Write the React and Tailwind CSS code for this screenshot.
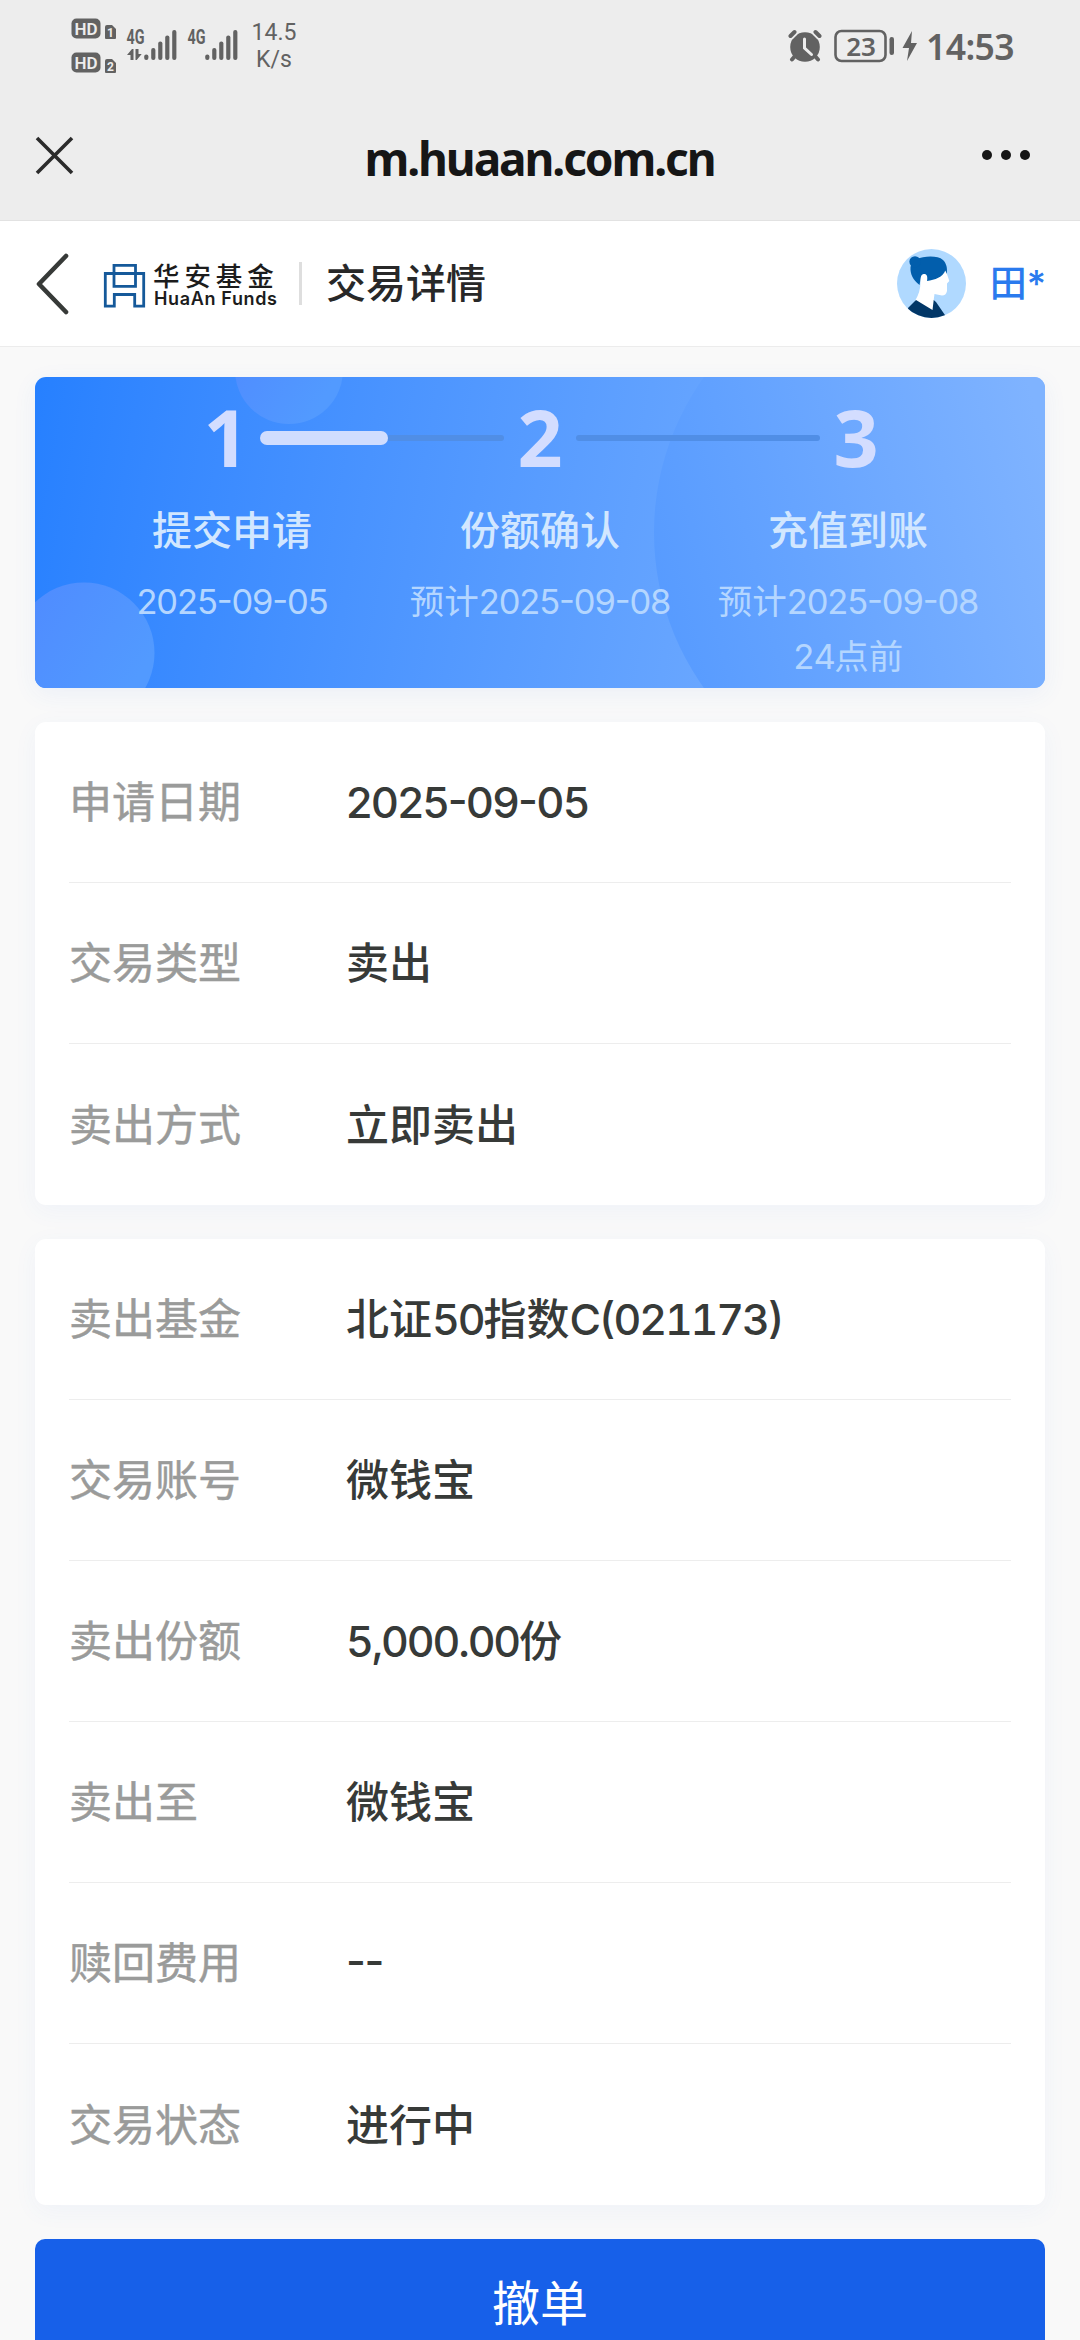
const steps = [
  { label: '提交申请', lines: ['2025-09-05'] },
  { label: '份额确认', lines: ['预计2025-09-08'] },
  { label: '充值到账', lines: ['预计2025-09-08', '24点前'] },
];

const requestRows = [
  ['申请日期', '2025-09-05'],
  ['交易类型', '卖出'],
  ['卖出方式', '立即卖出'],
];

const fundRows = [
  ['卖出基金', '北证50指数C(021173)'],
  ['交易账号', '微钱宝'],
  ['卖出份额', '5,000.00份'],
  ['卖出至', '微钱宝'],
  ['赎回费用', '--'],
  ['交易状态', '进行中'],
];

// Latin runs are set a little tighter than the Chinese around them.
// Tabular figures also widen the hyphen, so dates go without them.
function runClass(run) {
  if (!/^[\x20-\x7e]/.test(run)) return '';
  if (run.includes('-')) return "tracking-[-0.033em] [font-feature-settings:'case']";
  return "tracking-[-0.05em] [font-feature-settings:'tnum','case']";
}

function Mixed({ text }) {
  return text.split(/([\x20-\x7e]+)/).filter(Boolean).map((run, i) => (
    <span key={i} className={runClass(run)}>{run}</span>
  ));
}

function HdBadge({ sim }) {
  return (
    <svg width="46" height="22" viewBox="0 0 46 22" className="overflow-visible">
      <rect x="0.5" y="0.5" width="29" height="20" rx="5" fill="#626262" />
      <text x="15" y="16.5" textAnchor="middle" fontSize="17" fontWeight="600" fill="#ededed" fontFamily="Roboto, sans-serif">HD</text>
      <path d="M34 9q0-2 2-2h5l4 4v9q0 1-1 1h-9q-1 0-1-1z" fill="#626262" />
      <text x="39.5" y="18.5" textAnchor="middle" fontSize="12" fontWeight="700" fill="#ededed" fontFamily="Roboto, sans-serif">{sim}</text>
    </svg>
  );
}

function Signal({ data }) {
  return (
    <svg width="52" height="34" viewBox="0 0 52 34" fill="#626262" className="overflow-visible">
      <text x="-0.5" y="14.5" fontSize="19.5" fontWeight="700" textLength="18" lengthAdjust="spacingAndGlyphs" fontFamily="Roboto, sans-serif">4G</text>
      {data && <path d="M0 26l5-6h1.500v11H3.500v-5zM8.500 20l0 11h1.200l5-6h-3.200v-5z" />}
      <rect x="17.200" y="25.500" width="4.200" height="5.500" rx="2" />
      <rect x="24.200" y="19" width="4.200" height="12" rx="2" />
      <rect x="31.200" y="12.500" width="4.200" height="18.500" rx="2" />
      <rect x="38.200" y="6.500" width="4.200" height="24.500" rx="2" />
      <rect x="45.200" y="1" width="4.200" height="30" rx="2" />
    </svg>
  );
}

function StatusBar() {
  return (
    <div className="flex h-[100px] items-start justify-between pl-[71px] pr-[66px] text-[#626262]">
      <div className="flex">
        <div className="flex flex-col gap-3 pt-[18px]">
          <HdBadge sim="1" />
          <HdBadge sim="2" />
        </div>
        <div className="flex gap-[9px] pl-[10px] pt-[29px]">
          <Signal data />
          <Signal />
        </div>
        <div className="ml-[9px] mt-[19px] w-[50px] text-center font-[Roboto,sans-serif] text-[23px] leading-[27px]">
          <div>14.5</div>
          <div>K/s</div>
        </div>
      </div>
      <div className="flex items-center pt-[28px]">
        <svg width="34" height="34" viewBox="0 0 34 34">
          <circle cx="17" cy="18" r="14.800" fill="#626262" />
          <path d="M2 8l5-5M32 8l-5-5" stroke="#ededed" strokeWidth="7" />
          <path d="M2.500 7l4-4M31.500 7l-4-4M7 27l-3 3.500M27 27l3 3.500" stroke="#626262" strokeWidth="4" strokeLinecap="round" />
          <path d="M16.500 10v9l7 6.500" stroke="#ededed" strokeWidth="3" fill="none" strokeLinecap="round" />
        </svg>
        <svg className="ml-[12px]" width="62" height="34" viewBox="0 0 62 34">
          <rect x="1.500" y="2" width="50" height="30" rx="6" fill="none" stroke="#626262" strokeWidth="2.600" />
          <rect x="55.500" y="8" width="4.500" height="18" rx="2.200" fill="#626262" />
          <text x="27" y="26.500" textAnchor="middle" fontSize="26" fontWeight="600" fill="#626262" fontFamily="Noto Sans, sans-serif">23</text>
        </svg>
        <svg className="ml-[6px]" width="16" height="30" viewBox="0 0 16 30">
          <path d="M10 0L0.500 17H7L5 30 15 12H9z" fill="#626262" />
        </svg>
        <div className="ml-2 font-['Noto_Sans',sans-serif] text-[35.500px] font-semibold leading-[36px] tracking-[-0.6px]">14:53</div>
      </div>
    </div>
  );
}

function BrowserBar() {
  return (
    <div className="flex h-[121px] items-start justify-between border-b border-[#e2e2e2] pl-[35px] pr-[49px] pt-[35px]">
      <svg width="40" height="40" viewBox="0 0 40 40">
        <path d="M2 3l35 35M37 3L2 38" stroke="#2b2b2b" strokeWidth="3.600" />
      </svg>
      <div className="pl-[23px] font-['Noto_Sans',sans-serif] text-[46px] font-bold leading-[46px] tracking-[-2.100px] text-[#161616]">
        m.huaan.com.cn
      </div>
      <svg width="50" height="40" viewBox="0 0 50 40" fill="#161616">
        <circle cx="6" cy="20" r="5" />
        <circle cx="25" cy="20" r="5" />
        <circle cx="44" cy="20" r="5" />
      </svg>
    </div>
  );
}

function Avatar() {
  return (
    <svg width="69" height="69" viewBox="0 0 69 69">
      <defs>
        <clipPath id="face">
          <circle cx="34.500" cy="34.500" r="34.500" />
        </clipPath>
      </defs>
      <g clipPath="url(#face)">
        <rect width="69" height="69" fill="#b0d9ff" />
        <path d="M22 26L30 22 49.500 20 50 25 52.300 32 50 34.500 50 42Q49 46.500 45 46.500L37.500 45 36.700 51 38 54 36.500 62 18 52Q23.500 43 23.500 33z" fill="#fff" />
        <path d="M13.500 18C15 11 20 9.500 26 8.200C34 7 42 7.500 46 11C49.500 14.500 50.500 19 49.800 25L48.300 21.500C46 28 38 31 30 32C31 27 29.500 24.500 26.500 25C23 26 24 30 22.500 36C16 31 13 25 13.500 18z" fill="#025eac" />
        <circle cx="18" cy="12.800" r="5.600" fill="#025eac" />
        <path d="M19 51L35.500 61 36.700 51 39 53 50 69H12L11 59z" fill="#023767" />
      </g>
    </svg>
  );
}

function SiteHeader() {
  return (
    <header className="flex h-[126px] items-center border-b border-[#ececec] bg-white pl-[35px] pr-[34px]">
      <svg width="36" height="64" viewBox="0 0 36 64">
        <path d="M31 4L4 32l27 28" fill="none" stroke="#373a38" strokeWidth="4.600" strokeLinecap="round" strokeLinejoin="round" />
      </svg>
      <svg className="ml-[32px] mt-[3px]" width="43" height="45" viewBox="0 0 43 45" fill="none" stroke="#15599a" strokeWidth="2.800">
        <path d="M2.300 10.500h38.400v32.700h-9V31.500H11.300v11.700h-9z" />
        <path d="M11 2.300h21.500v21H11z" />
      </svg>
      <div className="ml-[7px] w-[124px] text-[#1c1c1c]">
        <div className="whitespace-nowrap text-[26.500px] font-medium leading-[30px] tracking-[4.900px]">华安基金</div>
        <div className="whitespace-nowrap pl-[1px] font-[Inter,sans-serif] text-[18px] font-semibold leading-[16px] tracking-[0.640px]">HuaAn Funds</div>
      </div>
      <div className="ml-[22px] h-[43px] w-[3px] bg-[#dedede]" />
      <h1 className="ml-[24px] text-[40px] font-medium leading-[40px] text-[#282828]">交易详情</h1>
      <div className="ml-auto flex items-center">
        <Avatar />
        <span className="ml-[24px] text-[37px] font-medium leading-[40px] text-[#2a7aee]">田*</span>
      </div>
    </header>
  );
}

function Progress() {
  return (
    <section className="relative h-[311px] overflow-hidden rounded-[11px] bg-linear-100 from-[#2680ff] to-[#84b7ff] shadow-[0_6px_24px_rgba(60,110,230,0.07)]">
      {/* decorative bubbles */}
      <svg className="absolute inset-0" width="1010" height="311" viewBox="0 0 1010 311">
        <defs>
          <linearGradient id="big" x1="0" y1="0.600" x2="1" y2="0.350">
            <stop offset="0" stopColor="#579bff" />
            <stop offset="0.750" stopColor="#7fb3ff" />
          </linearGradient>
          <linearGradient id="small" x1="0" y1="0.300" x2="0.800" y2="0.800">
            <stop offset="0" stopColor="#4f8cff" />
            <stop offset="1" stopColor="#529aff" />
          </linearGradient>
        </defs>
        <circle cx="886" cy="155.500" r="267" fill="url(#big)" />
        <circle cx="254" cy="-7" r="54" fill="url(#small)" />
        <circle cx="49" cy="276" r="70.500" fill="url(#small)" />
      </svg>
      <div className="relative">
        <div className="flex h-[122px] items-center pl-[168px] font-['Noto_Sans',sans-serif] text-[79px] font-bold leading-none text-[#d3ddff]">
          <span className="-mt-[3px] w-[46px] text-center">1</span>
          <div className="ml-[11px] flex h-[14px] w-[244px] items-center">
            <div className="h-[14px] w-[128px] rounded-full bg-[#d0ddfe]" />
            <div className="h-[6px] flex-1 rounded-r-full bg-[#508ee6]" />
          </div>
          <span className="-mt-[3px] ml-[13px] w-[46px] text-center">2</span>
          <div className="ml-[13px] h-[6px] w-[244px] rounded-full bg-[#508ee6]" />
          <span className="-mt-[3px] ml-[13px] w-[46px] text-center">3</span>
        </div>
        <div className="grid grid-cols-[308px_308px_308px] pl-[43px] text-center">
          {steps.map((step) => (
            <div key={step.label}>
              <div className="pt-[10px] text-[40px] font-medium leading-[44px] text-[#d2e7ff]">{step.label}</div>
              <div className="pt-[21px] text-[34.500px] leading-[55px] text-[#b4d6ff]">
                {step.lines.map((line) => (
                  <div key={line}><Mixed text={line} /></div>
                ))}
              </div>
            </div>
          ))}
        </div>
      </div>
    </section>
  );
}

function DetailCard({ rows }) {
  return (
    <section className="divide-y divide-[#ededed] rounded-[11px] bg-white px-[34px] shadow-[0_6px_24px_rgba(60,110,230,0.05)]">
      {rows.map(([label, value]) => (
        <div key={label} className="flex h-[161px] items-center text-[43px] leading-[60px]">
          <div className="w-[277px] text-[#9a9b9a] [-webkit-text-stroke:0.5px_#9a9b9a]">{label}</div>
          <div className="font-medium text-[#373a38]"><Mixed text={value} /></div>
        </div>
      ))}
    </section>
  );
}

export default function App() {
  return (
    <div className="h-[2340px] w-[1080px] overflow-hidden bg-[#f9f9f9] font-[Inter,'Noto_Sans_CJK_SC',sans-serif]">
      <div className="bg-[#ededed]">
        <StatusBar />
        <BrowserBar />
      </div>
      <SiteHeader />
      <main className="flex flex-col gap-[34px] px-[35px] pt-[30px]">
        <Progress />
        <DetailCard rows={requestRows} />
        <DetailCard rows={fundRows} />
        <button className="h-[130px] rounded-[10px] bg-[#1760e9] text-[48px] leading-[60px] text-white">撤单</button>
      </main>
    </div>
  );
}
